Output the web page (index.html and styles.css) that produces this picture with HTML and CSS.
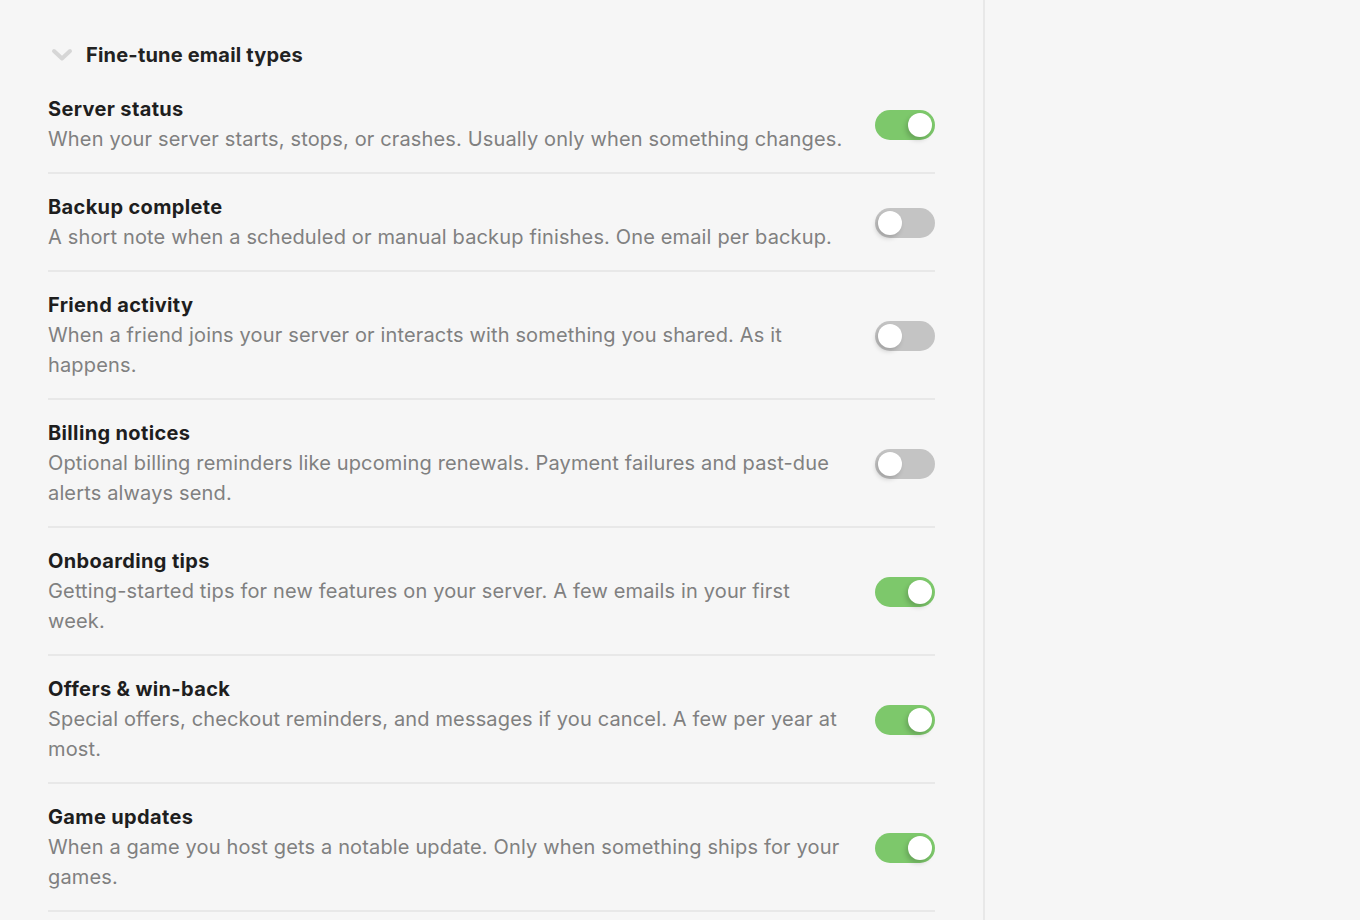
FILE: index.html
```html
<!DOCTYPE html>
<html>
<head>
<meta charset="utf-8">
<link rel="stylesheet" href="styles.css">
</head>
<body>
<div class="page">
  <main class="main">
    <div class="section-head">
      <svg class="chev" width="22" height="14" viewBox="0 0 22 14"><path d="M3 3 L11 10.5 L19 3" fill="none" stroke="#d6d6d6" stroke-width="4" stroke-linecap="round" stroke-linejoin="round"/></svg>
      <h2 class="section-title">Fine-tune email types</h2>
    </div>
    <ul class="list">
      <li class="row">
        <div class="text"><div class="name">Server status</div><div class="desc">When your server starts, stops, or crashes. Usually only when something changes.</div></div>
        <span class="toggle on"><span class="knob"></span></span>
      </li>
      <li class="row">
        <div class="text"><div class="name">Backup complete</div><div class="desc">A short note when a scheduled or manual backup finishes. One email per backup.</div></div>
        <span class="toggle"><span class="knob"></span></span>
      </li>
      <li class="row">
        <div class="text"><div class="name">Friend activity</div><div class="desc">When a friend joins your server or interacts with something you shared. As it happens.</div></div>
        <span class="toggle"><span class="knob"></span></span>
      </li>
      <li class="row">
        <div class="text"><div class="name">Billing notices</div><div class="desc">Optional billing reminders like upcoming renewals. Payment failures and past-due alerts always send.</div></div>
        <span class="toggle"><span class="knob"></span></span>
      </li>
      <li class="row">
        <div class="text"><div class="name">Onboarding tips</div><div class="desc">Getting-started tips for new features on your server. A few emails in your first week.</div></div>
        <span class="toggle on"><span class="knob"></span></span>
      </li>
      <li class="row">
        <div class="text"><div class="name">Offers &amp; win-back</div><div class="desc">Special offers, checkout reminders, and messages if you cancel. A few per year at most.</div></div>
        <span class="toggle on"><span class="knob"></span></span>
      </li>
      <li class="row">
        <div class="text"><div class="name">Game updates</div><div class="desc">When a game you host gets a notable update. Only when something ships for your games.</div></div>
        <span class="toggle on"><span class="knob"></span></span>
      </li>
    </ul>
  </main>
  <aside class="side"></aside>
</div>
</body>
</html>
```
FILE: styles.css
```css
html, body {
  margin: 0;
  padding: 0;
  background: #f6f6f6;
  font-family: Inter, "Noto Sans", sans-serif;
}
.page {
  display: flex;
  min-height: 920px;
}
.main {
  width: 887px;
  padding: 40px 48px 0 48px;
  border-right: 2px solid #e8e8e8;
}
.side {
  flex: 1;
}
.section-head {
  display: flex;
  align-items: center;
  height: 30px;
  margin-bottom: 6px;
}
.chev {
  margin-left: 3px;
  margin-right: 13px;
}
.section-title {
  margin: 0;
  font-size: 20px;
  font-weight: 700;
  letter-spacing: 0.2px;
  color: #222;
  line-height: 30px;
}
.list {
  list-style: none;
  margin: 0;
  padding: 0;
}
.row {
  display: flex;
  align-items: center;
  gap: 27px;
  padding: 18px 0;
  border-bottom: 2px solid #e8e8e8;
}
.text {
  flex: 1;
}
.name {
  font-size: 20px;
  font-weight: 700;
  letter-spacing: 0.35px;
  color: #1e1e1e;
  line-height: 30px;
}
.desc {
  font-size: 20px;
  letter-spacing: 0.15px;
  color: #808080;
  line-height: 30px;
}
.toggle {
  position: relative;
  flex: none;
  width: 60px;
  height: 30px;
  margin-top: 2px;
  border-radius: 15px;
  background: #c4c4c4;
}
.toggle.on {
  background: #7dc86b;
}
.knob {
  position: absolute;
  top: 3px;
  left: 3px;
  width: 24px;
  height: 24px;
  border-radius: 50%;
  background: #fff;
  box-shadow: -2px 3px 5px rgba(0,0,0,0.18);
}
.toggle.on .knob {
  left: 33px;
}
```
